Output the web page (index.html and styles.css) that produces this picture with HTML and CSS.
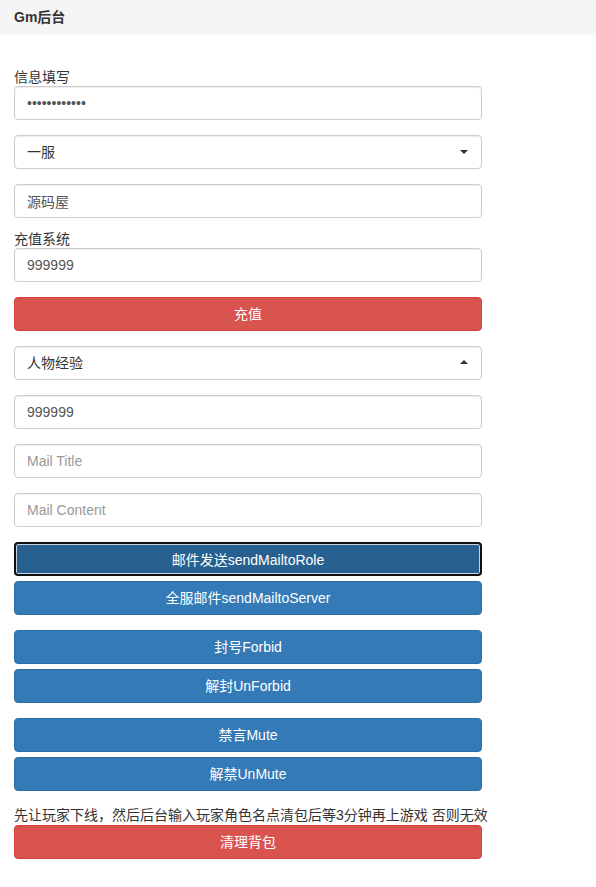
FILE: index.html
```html
<!DOCTYPE html>
<html lang="zh-CN">
<head>
<meta charset="utf-8">
<title>Gm后台</title>
<link rel="stylesheet" href="styles.css">
</head>
<body>
<div class="panel-heading">Gm后台</div>
<div class="panel-body">
  <label class="label first">信息填写</label>
  <input class="form-control" type="password" value="123456789012">
  <div class="select-wrap gap">
    <select class="form-control"><option>一服</option></select>
    <span class="caret down"></span>
  </div>
  <input class="form-control gap" type="text" value="源码屋">

  <label class="label second">充值系统</label>
  <input class="form-control" type="text" value="999999">
  <button class="btn btn-danger gap">充值</button>

  <div class="select-wrap gap">
    <select class="form-control"><option>人物经验</option></select>
    <span class="caret up"></span>
  </div>
  <input class="form-control gap" type="text" value="999999">
  <input class="form-control gap" type="text" placeholder="Mail Title">
  <input class="form-control gap" type="text" placeholder="Mail Content">
  <button class="btn btn-primary btn-focus gap">邮件发送sendMailtoRole</button>
  <button class="btn btn-primary small-gap">全服邮件sendMailtoServer</button>

  <button class="btn btn-primary gap">封号Forbid</button>
  <button class="btn btn-primary small-gap">解封UnForbid</button>

  <button class="btn btn-primary gap">禁言Mute</button>
  <button class="btn btn-primary small-gap">解禁UnMute</button>

  <p class="note">先让玩家下线，然后后台输入玩家角色名点清包后等3分钟再上游戏 否则无效</p>
  <button class="btn btn-danger">清理背包</button>
</div>
</body>
</html>
```

FILE: styles.css
```css
* { box-sizing: border-box; }

body {
  margin: 0;
  background: #fff;
  color: #333;
  font-family: "Liberation Sans", "Noto Sans CJK SC", sans-serif;
  font-size: 14px;
  line-height: 20px;
}

.panel-heading {
  height: 35px;
  line-height: 35px;
  padding: 0 14px;
  background: #f5f5f5;
  font-weight: bold;
  color: #333;
}

.panel-body {
  width: 496px;
  padding: 0 14px;
  display: flex;
  flex-direction: column;
}

.label {
  display: block;
  height: 18px;
  line-height: 18px;
  color: #333;
}
.label.first { margin-top: 33px; }
.label.second { margin-top: 12px; }

.form-control {
  display: block;
  width: 468px;
  height: 34px;
  padding: 6px 12px;
  font-family: inherit;
  font-size: 14px;
  line-height: 20px;
  color: #555;
  background: #fff;
  border: 1px solid #ccc;
  border-radius: 4px;
  box-shadow: inset 0 1px 1px rgba(0,0,0,.075);
  outline: none;
}
.form-control::placeholder { color: #999; }

select.form-control {
  -webkit-appearance: none;
  appearance: none;
  color: #333;
}

.select-wrap {
  position: relative;
  width: 468px;
}
.caret {
  position: absolute;
  right: 14px;
  top: 15px;
  width: 0;
  height: 0;
  border-left: 4px solid transparent;
  border-right: 4px solid transparent;
}
.caret.down { border-top: 4px solid #333; }
.caret.up { border-bottom: 4px solid #333; top: 14px; }

.gap { margin-top: 15px; }
.small-gap { margin-top: 5px; }

.btn {
  display: block;
  width: 468px;
  height: 34px;
  padding: 6px 12px;
  font-family: inherit;
  font-size: 14px;
  line-height: 20px;
  color: #fff;
  text-align: center;
  border: 1px solid transparent;
  border-radius: 4px;
  cursor: pointer;
}
.btn-danger {
  background: #d9534f;
  border-color: #d43f3a;
}
.btn-primary {
  background: #337ab7;
  border-color: #2e6da4;
}
.btn-focus {
  background: #286090;
  border: 2px solid #111;
  box-shadow: inset 0 0 0 1px #c8d3dd;
}

.note {
  margin: 14px 0 0;
  line-height: 20px;
  white-space: nowrap;
  color: #333;
}
```
